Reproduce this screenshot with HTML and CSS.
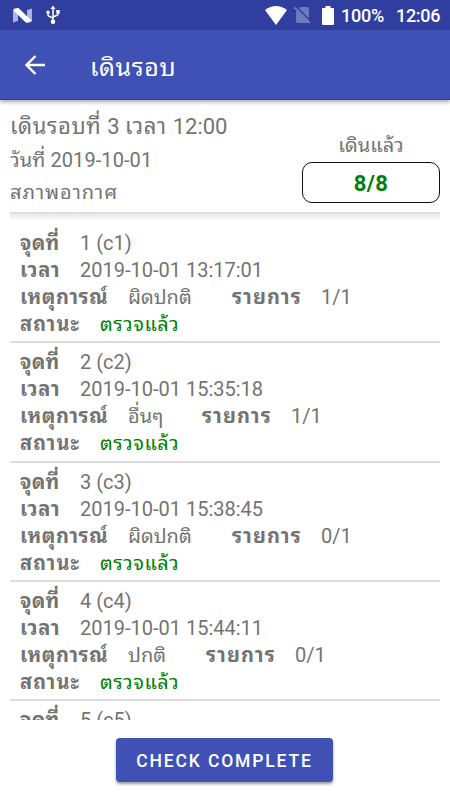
FILE: index.html
```html
<!DOCTYPE html>
<html lang="th">
<head>
<meta charset="utf-8">
<title>เดินรอบ</title>
<link rel="stylesheet" href="styles.css">
</head>
<body>
<div class="status">
  <svg class="n-logo" width="19" height="15" viewBox="0 0 19 15"><path fill="#adb3dc" d="M0 1.5 5 0V13L0 14.5ZM14 2 19 .5V13.5L14 15Z"/><path fill="#fff" d="M1 .8 5.5 0 18.5 12.5 17 14 13 14.7 1 3Z"/></svg>
  <svg class="usb" width="14" height="20" viewBox="0 0 14 20"><g fill="none" stroke="#fff" stroke-width="1.500"><path d="M7 3v14M2 7v3q0 1 1 1.300L7 13M12 6v3q0 1-1 1.300L7 12"/></g><path fill="#fff" d="M7 0.500 9.500 4H4.500ZM10.300 5h3.400v3.400h-3.400Z"/><circle cx="2" cy="7.200" r="1.700" fill="#fff"/><circle cx="7" cy="16.800" r="2.300" fill="#fff"/></svg>
  <span class="fill"></span>
  <svg class="wifi" width="22" height="19" viewBox="0 0 22 19"><path fill="#fff" d="M0 4Q11-4 22 4L11 19Z"/></svg>
  <svg class="sim" width="17" height="18" viewBox="0 0 17 18"><path fill="#7179bd" d="M6.500 1H13q2 0 2 2v14H4q-2 0-2-2V5.500Z"/><path stroke="#303f9f" stroke-width="1.500" d="M1.500 0 17 15.500"/><path stroke="#7179bd" stroke-width="1.800" d="M.5 1.500 16 17"/></svg>
  <svg class="battery" width="12" height="19" viewBox="0 0 12 19"><path fill="#fff" d="M3.500 0h5v2H11q1 0 1 1v15q0 1-1 1H1q-1 0-1-1V3q0-1 1-1h2.500Z"/></svg>
  <span class="percent">100%</span>
  <span class="clock">12:06</span>
</div>
<header class="bar">
  <svg width="20" height="20" viewBox="0 0 20 20"><path fill="none" stroke="#fff" stroke-width="2.400" d="M20 10H2M10.500 1 1.500 10l9 9"/></svg>
  <h1>เดินรอบ</h1>
</header>
<section class="summary">
  <div class="info">
    <div class="round"><span>เดินรอบที่ </span>3 <span>เวลา </span>12:00</div>
    <div class="date">วันที่ 2019-10-01</div>
    <div class="weather">สภาพอากาศ</div>
  </div>
  <div class="progress">
    <div class="done">เดินแล้ว</div>
    <div class="count">8/8</div>
  </div>
</section>
<main class="list">
  <article>
    <div class="row"><b class="short">จุดที่</b><span>1 (c1)</span></div>
    <div class="row"><b class="short time">เวลา</b><span>2019-10-01 13:17:01</span></div>
    <div class="row"><b class="event">เหตุการณ์</b><span class="kind">ผิดปกติ</span><b class="items">รายการ</b><span>1/1</span></div>
    <div class="row"><b class="state">สถานะ</b><span class="ok">ตรวจแล้ว</span></div>
  </article>
  <article>
    <div class="row"><b class="short">จุดที่</b><span>2 (c2)</span></div>
    <div class="row"><b class="short time">เวลา</b><span>2019-10-01 15:35:18</span></div>
    <div class="row"><b class="event">เหตุการณ์</b><span class="kind other">อื่นๆ</span><b class="items">รายการ</b><span>1/1</span></div>
    <div class="row"><b class="state">สถานะ</b><span class="ok">ตรวจแล้ว</span></div>
  </article>
  <article>
    <div class="row"><b class="short">จุดที่</b><span>3 (c3)</span></div>
    <div class="row"><b class="short time">เวลา</b><span>2019-10-01 15:38:45</span></div>
    <div class="row"><b class="event">เหตุการณ์</b><span class="kind">ผิดปกติ</span><b class="items">รายการ</b><span>0/1</span></div>
    <div class="row"><b class="state">สถานะ</b><span class="ok">ตรวจแล้ว</span></div>
  </article>
  <article>
    <div class="row"><b class="short">จุดที่</b><span>4 (c4)</span></div>
    <div class="row"><b class="short time">เวลา</b><span>2019-10-01 15:44:11</span></div>
    <div class="row"><b class="event">เหตุการณ์</b><span class="kind normal">ปกติ</span><b class="items">รายการ</b><span>0/1</span></div>
    <div class="row"><b class="state">สถานะ</b><span class="ok">ตรวจแล้ว</span></div>
  </article>
  <article>
    <div class="row"><b class="short">จุดที่</b><span>5 (c5)</span></div>
  </article>
</main>
<footer><button>CHECK COMPLETE</button></footer>
</body>
</html>
```
FILE: styles.css
```css
* { box-sizing: border-box; }
body {
  margin: 0;
  width: 450px;
  height: 800px;
  overflow: hidden;
  display: flex;
  flex-direction: column;
  background: #fff;
  color: #737373;
  font-family: Roboto, "Noto Sans Thai Looped", "Noto Sans Thai UI";
  font-size: 20px;
}
.status {
  flex: none;
  height: 30px;
  display: flex;
  align-items: center;
  padding: 0 10px 0 13px;
  background: #303f9f;
  color: #fff;
  font-size: 18px;
  font-weight: 500;
}
.status span { padding-top: 1px; }
.usb { margin-left: 14px; }
.fill { flex: 1; }
.sim { margin-left: 7px; }
.battery { margin-left: 11px; }
.percent { width: 43px; margin-left: 7px; white-space: nowrap; letter-spacing: -.2px; }
.clock { width: 44px; margin-left: 12px; white-space: nowrap; letter-spacing: -.3px; }
.bar {
  flex: none;
  height: 70px;
  display: flex;
  align-items: center;
  gap: 45px;
  padding-left: 25px;
  background: #3f51b5;
  border-bottom: 1px solid #2b3fa5;
  box-shadow: 0 2px 4px rgba(0, 0, 0, .35);
  color: #fff;
}
h1 { margin: 0; font-size: 25px; font-weight: 400; letter-spacing: .6px; }
.summary {
  flex: none;
  height: 112px;
  margin: 0 10px;
  display: flex;
  justify-content: space-between;
}
.info { padding-top: 10px; white-space: nowrap; }
.round { height: 34px; line-height: 34px; font-size: 22px; }
.round span { letter-spacing: .6px; }
.date, .weather { height: 32px; line-height: 32px; }
.date { letter-spacing: .08px; }
.weather { letter-spacing: .95px; }
.progress { width: 138px; padding-top: 28px; text-align: center; }
.done { height: 34px; line-height: 34px; }
.count {
  height: 41px;
  line-height: 41px;
  border: 1px solid #111;
  border-radius: 10px;
  color: #008000;
  font-size: 22px;
  font-weight: 700;
  letter-spacing: .3px;
}
.list {
  flex: none;
  height: 508px;
  margin: 0 10px;
  padding-top: 12px;
  overflow: hidden;
  background: linear-gradient(#d4d4d4, #e8e8e8 2px, #fff 9px);
}
article {
  height: 119.300px;
  padding: 6px 10px 0;
  border-bottom: 2px solid #dcdcdc;
}
.row { height: 27px; line-height: 27px; display: flex; white-space: nowrap; }
.short { width: 60px; letter-spacing: .3px; }
.time { letter-spacing: .7px; }
.event { width: 108px; letter-spacing: .6px; }
.kind { width: 104px; }
.other { width: 74px; }
.normal { width: 78px; }
.items { width: 89px; letter-spacing: 1.100px; }
.state { width: 80px; letter-spacing: 1px; }
.ok { color: #008000; letter-spacing: .45px; }
footer { padding-top: 18px; text-align: center; }
button {
  width: 217px;
  height: 44px;
  margin-right: 1px;
  padding: 0;
  border: 0;
  border-radius: 4px;
  background: #3f51b5;
  box-shadow: 0 2px 3px rgba(0, 0, 0, .4);
  color: #fff;
  font: 500 17.500px/46px Roboto, sans-serif;
  letter-spacing: 1.850px;
}
```
